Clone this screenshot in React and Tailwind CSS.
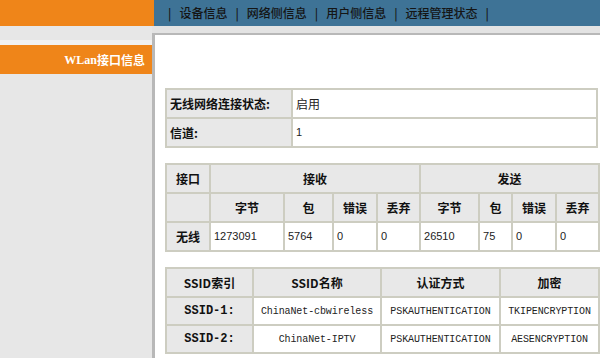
const cjk = { fontFamily: '"Noto Sans CJK SC", "Liberation Sans", sans-serif' };
const mono = { fontFamily: '"Liberation Mono", "Noto Sans CJK SC", monospace' };

const th = "border-2 border-[#cdcdc1] bg-[#e8e8e8] font-bold text-center text-[12px] text-[#111] p-0";
const td = "border-2 border-[#cdcdc1] bg-white text-[11px] text-[#222] p-0 pl-[3px] text-left";
const tdCenter = "border-2 border-[#cdcdc1] bg-white text-[10px] text-[#222] p-0 text-center tracking-[-0.1px]";

function StatusTable() {
  return (
    <table className="table-fixed border-collapse w-[433px]" style={cjk}>
      <colgroup>
        <col className="w-[126px]" />
        <col />
      </colgroup>
      <tbody>
        <tr className="h-[29px]">
          <td className="border-2 border-[#cdcdc1] bg-[#e8e8e8] font-bold text-left text-[12px] text-[#111] p-0 pl-[3px]">无线网络连接状态:</td>
          <td className={`${td} text-[12px]`}>启用</td>
        </tr>
        <tr className="h-[29px]">
          <td className="border-2 border-[#cdcdc1] bg-[#e8e8e8] font-bold text-left text-[12px] text-[#111] p-0 pl-[3px]">信道:</td>
          <td className={td} style={{ fontFamily: '"Liberation Sans", sans-serif' }}>1</td>
        </tr>
      </tbody>
    </table>
  );
}

function TrafficTable() {
  const widths = [44, 74, 49, 44, 43, 59, 33, 44, 43];
  const sub = ["字节", "包", "错误", "丢弃"];
  const values = ["1273091", "5764", "0", "0", "26510", "75", "0", "0"];
  return (
    <table className="table-fixed border-collapse w-[433px]" style={cjk}>
      <colgroup>
        {widths.map((w, i) => (
          <col key={i} style={{ width: `${w}px` }} />
        ))}
      </colgroup>
      <tbody>
        <tr className="h-[29px]">
          <td className={th}>接口</td>
          <td className={th} colSpan={4}>接收</td>
          <td className={th} colSpan={4}>发送</td>
        </tr>
        <tr className="h-[29px]">
          <td className={th}></td>
          {[...sub, ...sub].map((s, i) => (
            <td key={i} className={th}>{s}</td>
          ))}
        </tr>
        <tr className="h-[29px]">
          <td className={th}>无线</td>
          {values.map((v, i) => (
            <td key={i} className={td} style={{ fontFamily: '"Liberation Sans", sans-serif' }}>{v}</td>
          ))}
        </tr>
      </tbody>
    </table>
  );
}

function SsidTable() {
  const rows = [
    ["SSID-1:", "ChinaNet-cbwireless", "PSKAUTHENTICATION", "TKIPENCRYPTION"],
    ["SSID-2:", "ChinaNet-IPTV", "PSKAUTHENTICATION", "AESENCRYPTION"],
  ];
  return (
    <table className="table-fixed border-collapse w-[433px]" style={cjk}>
      <colgroup>
        <col className="w-[87px]" />
        <col className="w-[128px]" />
        <col className="w-[119px]" />
        <col className="w-[99px]" />
      </colgroup>
      <tbody>
        <tr className="h-[29px]">
          <td className={th}>SSID索引</td>
          <td className={th}>SSID名称</td>
          <td className={th}>认证方式</td>
          <td className={th}>加密</td>
        </tr>
        {rows.map((r) => (
          <tr key={r[0]} className="h-[28px]">
            <td className={th} style={mono}>{r[0]}</td>
            {r.slice(1).map((v, i) => (
              <td key={i} className={tdCenter} style={mono}>{v}</td>
            ))}
          </tr>
        ))}
      </tbody>
    </table>
  );
}

export default function App() {
  const nav = ["设备信息", "网络侧信息", "用户侧信息", "远程管理状态"];
  return (
    <div className="w-[600px] h-[358px] overflow-hidden bg-[#e6e6e6] flex flex-col" style={cjk}>
      <div className="flex h-[26px] shrink-0">
        <div className="w-[154px] bg-[#ef8519]" />
        <div className="flex-1 bg-[#3e7396] flex items-center pl-[6px] text-[12px] text-[#151515] font-medium">
          {nav.map((n) => (
            <span key={n} className="flex items-center">
              <span className="px-[8px]">|</span>
              <span>{n}</span>
            </span>
          ))}
          <span className="px-[8px]">|</span>
        </div>
      </div>
      <div className="flex flex-1 min-h-0">
        <div className="w-[152px] shrink-0 bg-[#e7e7e7] pt-[14px]">
          <div className="h-[5px] bg-[#f1f1f1]" />
          <div className="h-[29px] bg-[#ef8519] flex items-center justify-end pr-[7px] text-white text-[12px] font-bold">
            <span style={{ fontFamily: '"Liberation Serif", serif' }}>WLan</span>
            <span>接口信息</span>
          </div>
        </div>
        <div className="flex-1 flex flex-col min-w-0">
          <div className="h-[7px] shrink-0 bg-[#e3e3e3]" />
          <div className="flex-1 bg-white border-l-[3px] border-t-[2px] border-[#b8b8b8] pl-[10px] pt-[53px] flex flex-col gap-[15px]">
            <StatusTable />
            <TrafficTable />
            <div className="flex flex-col gap-[7px]">
              <SsidTable />
              <div className="w-[433px] h-[8px] border-2 border-b-0 border-[#cdcdc1] bg-[#f4f4f4]" />
            </div>
          </div>
        </div>
      </div>
    </div>
  );
}
